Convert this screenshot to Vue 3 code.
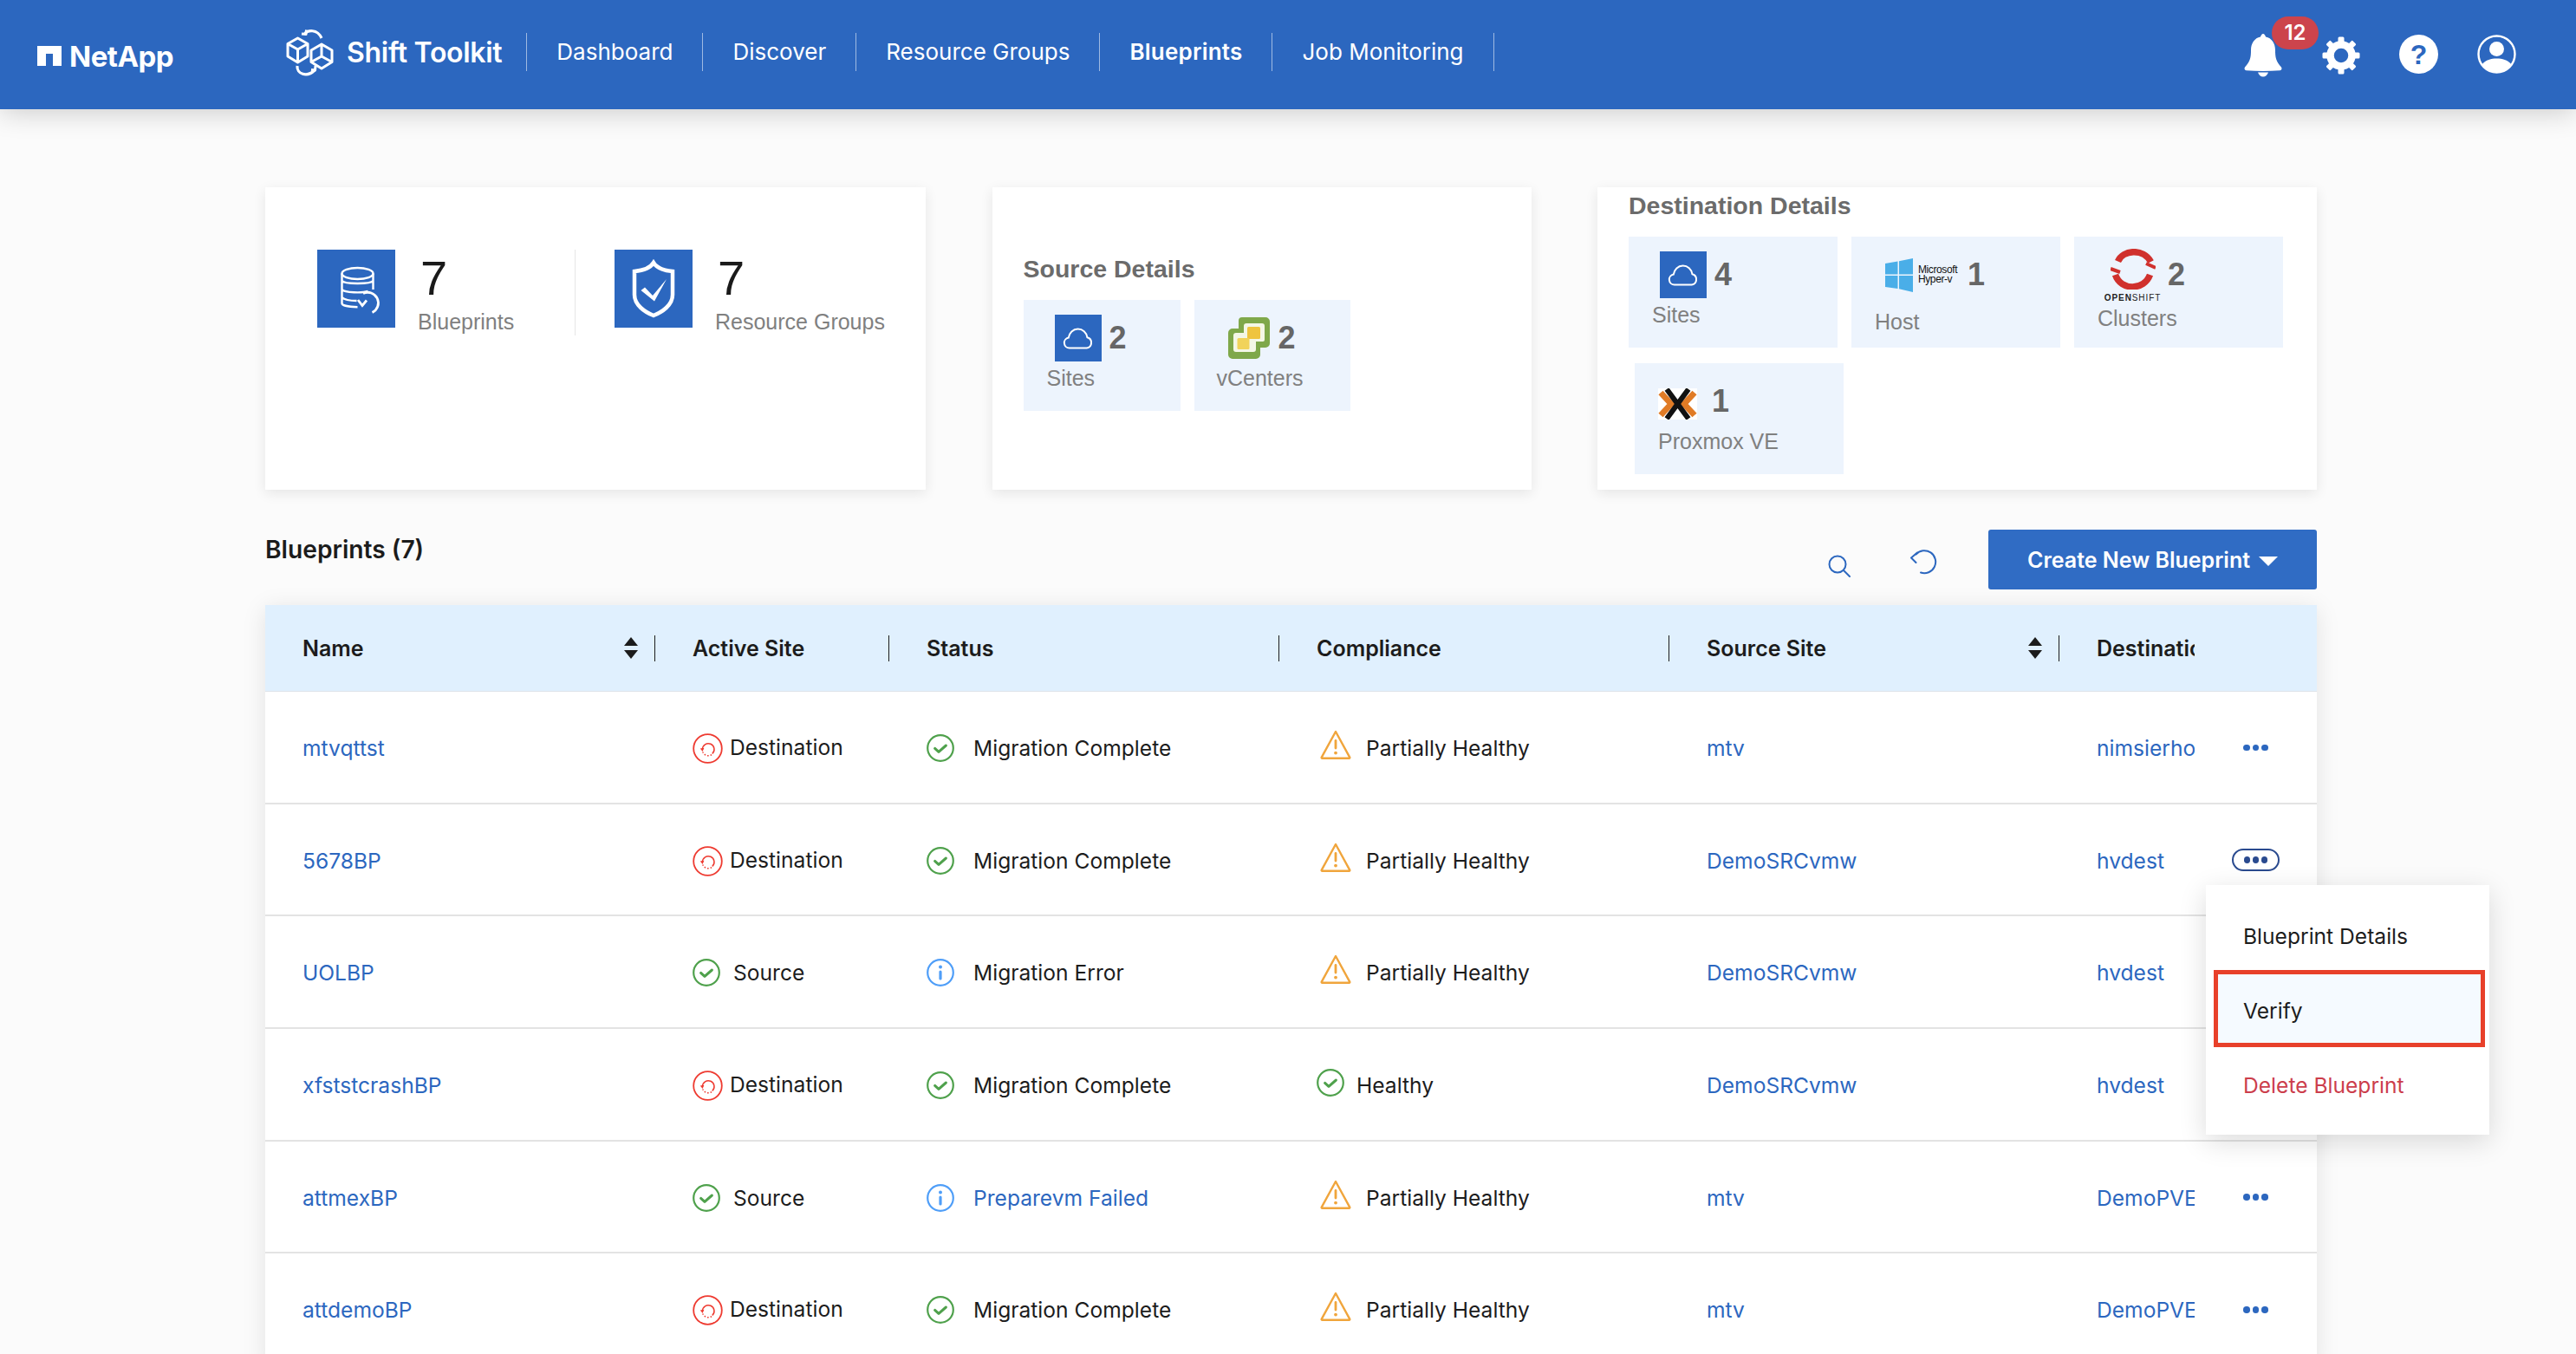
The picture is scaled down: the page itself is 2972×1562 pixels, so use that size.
<script setup>
const navItems = [
  { label: 'Dashboard' },
  { label: 'Discover' },
  { label: 'Resource Groups' },
  { label: 'Blueprints', active: true },
  { label: 'Job Monitoring' }
]
const gearAngles = [0, 45, 90, 135, 180, 225, 270, 315]
const columns = [
  { label: 'Name', sort: true },
  { label: 'Active Site' },
  { label: 'Status' },
  { label: 'Compliance' },
  { label: 'Source Site', sort: true },
  { label: 'Destination', clip: true }
]
const dest = { icon: 'restore', label: 'Destination' }
const src = { icon: 'check', label: 'Source' }
const complete = { icon: 'check', label: 'Migration Complete' }
const partial = { icon: 'warn', label: 'Partially Healthy' }
const rows = [
  { name: 'mtvqttst', site: dest, status: complete, comp: partial, source: 'mtv', target: 'nimsierhost' },
  { name: '5678BP', site: dest, status: complete, comp: partial, source: 'DemoSRCvmw', target: 'hvdest', open: true },
  { name: 'UOLBP', site: src, status: { icon: 'info', label: 'Migration Error' }, comp: partial, source: 'DemoSRCvmw', target: 'hvdest', hideMenu: true },
  { name: 'xfststcrashBP', site: dest, status: complete, comp: { icon: 'check', label: 'Healthy', healthy: true }, source: 'DemoSRCvmw', target: 'hvdest', hideMenu: true },
  { name: 'attmexBP', site: src, status: { icon: 'info', label: 'Preparevm Failed', link: true }, comp: partial, source: 'mtv', target: 'DemoPVEhost' },
  { name: 'attdemoBP', site: dest, status: complete, comp: partial, source: 'mtv', target: 'DemoPVEhost' }
]
</script>

<template>
  <div class="page">
    <svg class="defs" width="0" height="0" aria-hidden="true">
      <symbol id="check" viewBox="0 0 32 32">
        <circle cx="16" cy="16" r="14.8" fill="none" stroke="#4fa14c" stroke-width="2.2" />
        <path d="M9.6 16.4l4.4 4 8.4-7.4" fill="none" stroke="#4fa14c" stroke-width="3" stroke-linecap="round" stroke-linejoin="round" />
      </symbol>
      <symbol id="info" viewBox="0 0 32 32">
        <circle cx="16" cy="16" r="14.8" fill="none" stroke="#4f9ef8" stroke-width="2.2" />
        <circle cx="16" cy="9.5" r="2" fill="#4f9ef8" />
        <rect x="14.4" y="13.5" width="3.2" height="11" rx="1.6" fill="#4f9ef8" />
      </symbol>
      <symbol id="restore" viewBox="0 0 35 35">
        <circle cx="17.5" cy="17.5" r="16.3" fill="none" stroke="#ee3a30" stroke-width="1.8" />
        <path d="M11.4 18.5a6.8 6.8 0 1 1 11.4 5" fill="none" stroke="#ee3a30" stroke-width="1.5" />
        <path d="M22 24.6a6.8 6.8 0 0 1-10.2-3.2" fill="none" stroke="#ee3a30" stroke-width="1.5" stroke-dasharray="1.6 2" />
        <path d="M8.8 17.4l4.6-.6-1.8 4.2z" fill="#ee3a30" />
      </symbol>
      <symbol id="warn" viewBox="0 0 36 34">
        <path d="M18 2L1.8 31.6c-.3.6 0 1.2.7 1.2h31c.7 0 1-.6.7-1.2z" fill="none" stroke="#f0a53c" stroke-width="2.4" stroke-linejoin="round" />
        <rect x="16.6" y="11" width="2.8" height="11.5" rx="1.4" fill="#f0a53c" />
        <circle cx="18" cy="26.6" r="1.9" fill="#f0a53c" />
      </symbol>
      <symbol id="cloud" viewBox="0 0 54 54">
        <path d="M17 38.5a6 6 0 0 1-1.2-11.9C16.6 20.8 21 16.6 26.6 16.6c5.5 0 9.9 4 10.8 9.6a6.3 6.3 0 0 1-.6 12.3z" fill="none" stroke="#fff" stroke-width="2" />
      </symbol>
      <symbol id="sort" viewBox="0 0 16 25">
        <path d="M8 0l8 10H0zM0 15h16l-8 10z" fill="#1c1c1c" />
      </symbol>
    </svg>

    <header class="topbar">
      <div class="netapp">
        <svg class="netapp-mark" viewBox="0 0 28 23"><path d="M0 0h28v23H18V9h-8v14H0z" fill="#fff" /></svg>
        <span>NetApp</span>
      </div>
      <div class="brand">
        <svg class="brand-mark" viewBox="10 8 55 58" fill="none" stroke="#fff" stroke-width="3" stroke-linejoin="round">
          <path d="M23.5 20L12 26.5v14.5L23.5 48 35 41V26.5zM12 26.5L23.5 33 35 26.5M23.5 33v15" />
          <path d="M51 27L39 34v13.500L51 55l12-7.500V34zM51 27v14M39 47.500L51 41l12 6.500" />
          <path d="M31 15.500c4-5 15-6.500 20 4.500" stroke-width="3.200" />
          <path d="M28 15l5 .5.5-5" />
          <path d="M23 52c-1 9 11 14 20 5" stroke-width="3.200" />
          <path d="M39 56.500l4.500.5.500-5" />
        </svg>
        <span>Shift Toolkit</span>
      </div>
      <nav class="nav">
        <a v-for="item in navItems" :key="item.label" class="nav-item" :class="{ active: item.active }">{{ item.label }}</a>
      </nav>
      <div class="tools">
        <div class="bell">
          <svg class="bell-icon" viewBox="0 0 44 51" fill="#fff">
            <path d="M22 1c1.500 0 2.500 2 3 3.600C32 6 36 12 36 20c0 8 .8 13 7 19.500 1 1.500.5 3.500-1.500 3.800-13 1-26 1-39 0-2-.3-2.500-2.300-1.500-3.800C7.200 33 8 28 8 20c0-8 4-14 11-15.400.5-1.600 1.500-3.600 3-3.600z" />
            <path d="M16 45.500h12c-1 3-3.500 5-6 5s-5-2-6-5z" />
          </svg>
          <span class="badge">12</span>
        </div>
        <svg class="gear" viewBox="0 0 44 44">
          <circle cx="22" cy="22" r="12.500" fill="none" stroke="#fff" stroke-width="8.500" />
          <rect v-for="a in gearAngles" :key="a" x="18.500" y="0.500" width="7" height="8" rx="1.500" fill="#fff" :transform="`rotate(${a} 22 22)`" />
        </svg>
        <svg class="help" viewBox="0 0 45 45">
          <circle cx="22.500" cy="22.500" r="22.500" fill="#fff" />
          <text x="22.500" y="34" text-anchor="middle" class="help-mark">?</text>
        </svg>
        <svg class="user" viewBox="0 0 45 45">
          <circle cx="22.500" cy="22.500" r="21" fill="none" stroke="#fff" stroke-width="2.400" />
          <circle cx="22.500" cy="16.500" r="8.500" fill="#fff" />
          <path d="M5.500 34.500C10 29 16 27.500 22.500 27.500s12.500 1.500 17 7a21 21 0 0 1-34 0z" fill="#fff" />
        </svg>
      </div>
    </header>

    <main class="main">
      <section class="cards">
        <div class="card card-total">
          <div class="stat stat-first">
            <div class="stat-icon">
              <svg viewBox="0 0 90 90" fill="none" stroke="#fff" stroke-width="2.400">
                <ellipse cx="46.500" cy="27.500" rx="18" ry="6.500" />
                <path d="M28.500 27.500V62c0 2 6 4 18 4.200M64.500 27.500V46M28.500 36c3 4 33 4 36 0M28.500 46c3 4 24 4 30 2M28.500 55c3 3 10 4 17 4" />
                <path d="M53 50.500a12 12 0 1 1 10.500 22" stroke-width="2.800" />
                <path d="M47 58l5 6.500 5-6" stroke-width="2.800" />
              </svg>
            </div>
            <div class="stat-text">
              <div class="stat-num">7</div>
              <div class="stat-label">Blueprints</div>
            </div>
          </div>
          <div class="stat">
            <div class="stat-icon">
              <svg viewBox="0 0 90 90">
                <path d="M45 15c3 5 10 9 22 10v27c0 12-12 20-22 24-10-4-22-12-22-24V25c12-1 19-5 22-10z" fill="none" stroke="#fff" stroke-width="4.500" />
                <path d="M30.500 47l4.500-3.500 9 9.500 16-19-14 25.500z" fill="#fff" />
              </svg>
            </div>
            <div class="stat-text">
              <div class="stat-num">7</div>
              <div class="stat-label">Resource Groups</div>
            </div>
          </div>
        </div>

        <div class="card card-source">
          <h3 class="card-title">Source Details</h3>
          <div class="tiles">
            <div class="tile tile-src-sites">
              <div class="tile-head">
                <svg class="cloud-box"><use href="#cloud" /></svg>
                <span class="tile-num">2</span>
              </div>
              <div class="tile-label">Sites</div>
            </div>
            <div class="tile tile-vcenter">
              <div class="tile-head">
                <svg class="vcenter-logo" viewBox="0 0 48 48">
                  <path d="M16 0h27a5 5 0 0 1 5 5v25a5 5 0 0 1-5 5h-6v8a5 5 0 0 1-5 5H5a5 5 0 0 1-5-5V18a5 5 0 0 1 5-5h7V4a4 4 0 0 1 4-4z" fill="#7fa84a" />
                  <path d="M21 7h18a3 3 0 0 1 3 3v16a2 2 0 0 1-2 2h-8v9a3 3 0 0 1-3 3H9a3 3 0 0 1-3-3V21a3 3 0 0 1 3-3h9v-8a3 3 0 0 1 3-3z" fill="#f4f7e6" />
                  <rect x="22" y="11" width="15" height="14" rx="1.500" fill="#efc43e" />
                  <rect x="10.500" y="24" width="14" height="13" rx="1.500" fill="#f1d35a" />
                </svg>
                <span class="tile-num">2</span>
              </div>
              <div class="tile-label">vCenters</div>
            </div>
          </div>
        </div>

        <div class="card card-dest">
          <h3 class="card-title">Destination Details</h3>
          <div class="dest-grid">
            <div class="tile tile-wide tile-dest-sites">
              <div class="tile-head">
                <svg class="cloud-box"><use href="#cloud" /></svg>
                <span class="tile-num">4</span>
              </div>
              <div class="tile-label">Sites</div>
            </div>
            <div class="tile tile-wide tile-host">
              <div class="tile-head">
                <div class="hyperv">
                  <svg class="win" viewBox="0 0 32 39">
                    <path d="M0 6l14.500-2.500V18.500H0zM16 3.200L32 0v18.500H16zM0 20h14.500v15L0 33zM16 20h16v19l-16-3.800z" fill="#4aaee8" />
                  </svg>
                  <div class="hyperv-text"><span>Microsoft</span><span>Hyper-v</span></div>
                </div>
                <span class="tile-num">1</span>
              </div>
              <div class="tile-label">Host</div>
            </div>
            <div class="tile tile-wide tile-clusters">
              <div class="tile-head">
                <div class="openshift">
                  <svg viewBox="0 0 52 47" class="os-ring" fill="none" stroke="#d0312d" stroke-width="7.500">
                    <path d="M8.500 14.500C14 1 38 -1 46.500 15" />
                    <path d="M45.500 30C39 48 12 49 5.500 30" />
                    <path d="M0 23l11 4M41 17l11 5" stroke-width="4" />
                  </svg>
                  <div class="os-text"><b>OPEN</b>SHIFT</div>
                </div>
                <span class="tile-num">2</span>
              </div>
              <div class="tile-label">Clusters</div>
            </div>
            <div class="tile tile-wide tile-proxmox">
              <div class="tile-head">
                <svg class="proxmox" viewBox="0 0 45 36">
                  <rect width="45" height="36" fill="#fff" />
                  <path d="M3 5l12 13L3 31M42 5L30 18l12 13" fill="none" stroke="#e07b26" stroke-width="7" />
                  <path d="M10 1l25 34M35 1L10 35" fill="none" stroke="#111" stroke-width="6" />
                </svg>
                <span class="tile-num">1</span>
              </div>
              <div class="tile-label">Proxmox VE</div>
            </div>
          </div>
        </div>
      </section>

      <section class="toolbar">
        <h2 class="list-title">Blueprints (7)</h2>
        <svg class="search" viewBox="0 0 26 26" fill="none" stroke="#2c67bf" stroke-width="2">
          <circle cx="11" cy="11" r="9.500" /><path d="M18 18l7 7" stroke-linecap="round" />
        </svg>
        <svg class="refresh" viewBox="0 0 34 29" fill="none" stroke="#2c67bf" stroke-width="2">
          <path d="M6.500 5.500A13 13 0 1 1 12 26.500" stroke-linecap="round" />
          <path d="M1 9.500l5.500 5.500M1 9.500l7-6" stroke-linecap="round" />
        </svg>
        <button class="create">Create New Blueprint<span class="caret"></span></button>
      </section>

      <section class="table-wrap">
        <div class="table">
          <div class="thead">
            <div v-for="col in columns" :key="col.label" class="th" :class="{ 'th-clip': col.clip }">
              <span class="th-label">{{ col.label }}</span>
              <svg v-if="col.sort" class="sort"><use href="#sort" /></svg>
            </div>
          </div>
          <div v-for="row in rows" :key="row.name" class="tr">
            <div class="td"><a class="link">{{ row.name }}</a></div>
            <div class="td">
              <svg class="site-icon" :class="row.site.icon"><use :href="'#' + row.site.icon" /></svg>
              <span :class="{ 'site-dest': row.site.icon === 'restore' }">{{ row.site.label }}</span>
            </div>
            <div class="td">
              <svg class="st-icon"><use :href="'#' + row.status.icon" /></svg>
              <span :class="{ link: row.status.link }">{{ row.status.label }}</span>
            </div>
            <div class="td">
              <svg v-if="row.comp.healthy" class="healthy-icon"><use href="#check" /></svg>
              <svg v-else class="warn-icon"><use href="#warn" /></svg>
              <span>{{ row.comp.label }}</span>
            </div>
            <div class="td"><a class="link">{{ row.source }}</a></div>
            <div class="td td-clip"><a class="link">{{ row.target }}</a></div>
            <div class="td-action">
              <span v-if="!row.hideMenu" class="dots" :class="{ open: row.open }"><i></i><i></i><i></i></span>
            </div>
          </div>
        </div>
        <div class="menu">
          <div class="menu-item">Blueprint Details</div>
          <div class="menu-item menu-verify"><span>Verify</span></div>
          <div class="menu-item menu-delete">Delete Blueprint</div>
        </div>
      </section>
    </main>
  </div>
</template>

<style>
html, body { margin: 0; background: #fbfbfb; overflow: hidden; }
</style>

<style scoped>
.page { width: 2972px; height: 1562px; overflow: hidden; background: #fbfbfb; font-family: Inter, "Liberation Sans", sans-serif; color: #1c1c1c; position: relative; }
.defs { position: absolute; }

.topbar { height: 126px; background: #2c67bf; color: #fff; display: flex; align-items: center; padding-left: 43px; box-shadow: 0 3px 30px rgba(0,0,0,.2); position: relative; z-index: 2; }
.netapp { display: flex; align-items: center; gap: 9px; width: 287px; font-size: 33px; font-weight: 700; margin-top: 3px; letter-spacing: -.5px; }
.netapp-mark { width: 28px; height: 23px; }
.brand { display: flex; align-items: center; gap: 15px; font-size: 32px; font-weight: 600; letter-spacing: -.3px; margin-top: -5px; padding-right: 28px; border-right: 0; }
.brand-mark { width: 55px; height: 58px; }
.nav { display: flex; align-items: center; height: 44px; margin-top: -6px; border-left: 1px solid rgba(255,255,255,.55); }
.nav-item { padding: 0 34px; font-size: 26px; line-height: 44px; border-right: 1px solid rgba(255,255,255,.55); white-space: nowrap; }
.nav-item.active { font-weight: 600; letter-spacing: .2px; }
.tools { position: absolute; top: 0; right: 69px; height: 126px; display: flex; align-items: center; }
.bell { position: relative; width: 44px; height: 51px; margin-top: 1px; }
.bell-icon { width: 44px; height: 51px; display: block; }
.badge { position: absolute; left: 32px; top: -19px; width: 54px; height: 38px; border-radius: 19px; background: #cc444c; font-size: 24px; font-weight: 600; line-height: 38px; text-align: center; }
.gear { width: 44px; height: 44px; margin-left: 46px; margin-top: 1px; }
.help { width: 45px; height: 45px; margin-left: 45px; margin-top: -1px; }
.help-mark { font: 700 32px "Liberation Sans", sans-serif; fill: #2c67bf; }
.user { width: 45px; height: 45px; margin-left: 45px; margin-top: -1px; }

.main { padding: 90px 299px 0 306px; }
.cards { display: flex; justify-content: space-between; }
.card { background: #fff; height: 349px; box-shadow: 0 4px 14px rgba(0,0,0,.09); box-sizing: border-box; font-family: "Liberation Sans", sans-serif; }
.card-total { width: 762px; display: flex; padding: 72px 0 0 60px; }
.stat { display: flex; gap: 26px; align-items: flex-start; }
.stat-first { width: 297px; height: 99px; border-right: 1px solid #e6e6e6; margin-right: 45px; box-sizing: content-box; }
.stat-icon { width: 90px; height: 90px; background: #2c67bf; flex: none; }
.stat-icon svg { width: 90px; height: 90px; display: block; }
.stat-num { font-size: 56px; line-height: 56px; color: #1a1a1a; margin-top: 5px; padding-left: 3px; }
.stat-label { font-size: 25px; line-height: 30px; color: #808080; margin-top: 7px; }
.card-source { width: 622px; padding: 78px 0 0 36px; }
.card-dest { width: 830px; padding: 0 0 0 36px; }
.card-title { margin: 0 0 20px; font-size: 28.500px; line-height: 32px; font-weight: 700; color: #6b6b6b; }
.card-dest .card-title { margin: 0; padding-top: 7px; height: 57px; line-height: 28px; box-sizing: border-box; }
.tiles { display: flex; gap: 16px; }
.tile { width: 181px; height: 128px; background: #edf4fd; box-sizing: border-box; padding-top: 18px; }
.tile-wide { width: 241px; }
.tile-vcenter { width: 180px; }
.tile-head { display: flex; align-items: center; height: 52px; }
.tile-num { font-size: 36px; font-weight: 700; color: #666; line-height: 52px; }
.tile-label { font-size: 25px; line-height: 30px; color: #808080; margin-left: 27px; margin-top: 5px; }
.cloud-box { width: 54px; height: 54px; background: #2c67bf; display: block; flex: none; }
.tile-src-sites .tile-head, .tile-dest-sites .tile-head { padding-left: 36px; gap: 9px; }
.tile-vcenter .tile-head { padding-left: 39px; gap: 10px; }
.tile-vcenter .tile-label { margin-left: 26px; }
.vcenter-logo { width: 48px; height: 48px; flex: none; }
.dest-grid { display: flex; flex-wrap: wrap; gap: 18px 16px; width: 760px; }
.tile-host .tile-head { padding-left: 39px; gap: 12px; }
.tile-host .tile-label { margin-top: 13px; }
.hyperv { display: flex; gap: 6px; align-items: center; width: 83px; }
.win { width: 32px; height: 39px; flex: none; }
.hyperv-text { font-size: 12px; line-height: 11px; color: #111; letter-spacing: -.4px; display: flex; flex-direction: column; }
.tile-clusters .tile-head { padding-left: 37px; gap: 10px; }
.tile-clusters .tile-label { margin-top: 9px; }
.openshift { width: 61px; display: flex; flex-direction: column; align-items: center; margin-top: 2px; }
.os-ring { width: 52px; height: 47px; }
.os-text { font-size: 10px; line-height: 10px; letter-spacing: .9px; margin-top: 5px; color: #222; white-space: nowrap; }
.tile-dest-sites, .tile-host, .tile-clusters { flex: none; }
.tile-proxmox { margin-left: 7px; margin-top: 0; }
.tile-proxmox .tile-head { padding-left: 27px; gap: 17px; }
.proxmox { width: 45px; height: 36px; margin-top: 6px; flex: none; }

.toolbar { display: flex; align-items: flex-start; margin-top: 46px; height: 69px; margin-bottom: 18px; }
.list-title { margin: 0 auto 0 0; font-size: 28.200px; line-height: 46px; font-weight: 600; color: #1c1c1c; }
.search { width: 26px; height: 26px; margin-top: 29px; margin-right: 69px; }
.refresh { width: 34px; height: 29px; margin-top: 23px; margin-right: 56px; }
.create { width: 379px; height: 69px; border: 0; border-radius: 3px; background: #306cc4; color: #fff; font-family: inherit; font-size: 25px; font-weight: 600; padding: 0; display: flex; align-items: center; justify-content: center; gap: 10px; }
.caret { width: 0; height: 0; border-left: 11px solid transparent; border-right: 11px solid transparent; border-top: 11px solid #fff; margin-top: 3px; }

.table-wrap { position: relative; width: 2367px; }
.table { background: #fff; box-shadow: 0 4px 26px rgba(0,0,0,.1); }
.thead, .tr { display: grid; grid-template-columns: 450px 270px 450px 450px 450px 156px 141px; }
.thead { height: 100px; background: #e0f0fe; border-bottom: 1px solid #dde3ea; box-sizing: border-box; }
.th { display: flex; align-items: center; padding-left: 43px; position: relative; font-size: 25px; font-weight: 600; color: #1c1c1c; white-space: nowrap; min-width: 0; }
.th::after { content: ""; position: absolute; right: 0; top: 35px; height: 30px; border-right: 1px solid #1c1c1c; }
.th-clip { overflow: hidden; padding-right: 0; }
.th-clip::after { display: none; }
.sort { width: 16px; height: 25px; position: absolute; right: 20px; top: 37px; }
.tr { height: 129.700px; border-bottom: 2px solid #e3e3e3; box-sizing: border-box; font-size: 24.600px; }
.td { display: flex; align-items: center; padding-left: 43px; padding-top: 2px; white-space: nowrap; min-width: 0; overflow: hidden; }
.td-clip { overflow: hidden; }
.link { color: #2c67bf; }
.site-icon { width: 32px; height: 32px; margin-right: 15px; flex: none; }
.site-icon.restore { width: 35px; height: 35px; margin-right: 8px; margin-top: 1px; }
.site-dest { margin-top: -2px; }
.st-icon { width: 32px; height: 32px; margin-right: 22px; flex: none; }
.warn-icon { width: 36px; height: 34px; margin: -8px 17px 0 4px; flex: none; }
.healthy-icon { width: 32px; height: 32px; margin: -6px 14px 0 0; flex: none; }
.td-action { display: flex; align-items: center; padding-left: 56px; padding-top: 1px; }
.dots { display: flex; gap: 3px; }
.dots i { width: 7.500px; height: 7.500px; border-radius: 50%; background: #2c67bf; display: block; }
.dots.open { border: 2px solid #2a4a8f; border-radius: 14px; padding: 7px 12px; margin-left: -13px; width: 55px; box-sizing: border-box; height: 26px; justify-content: center; }
.dots.open i { background: #2a4a8f; }

.menu { position: absolute; left: 2239px; top: 323px; width: 327px; padding: 16px 0 14px; background: #fff; box-shadow: 0 8px 30px rgba(0,0,0,.14); z-index: 3; font-size: 24.600px; }
.menu-item { height: 86px; display: flex; align-items: center; padding-left: 43px; position: relative; }
.menu-verify span { position: relative; z-index: 1; }
.menu-verify::before { content: ""; position: absolute; left: 9px; right: 5px; top: -4px; bottom: 1px; background: #f5faff; border: 5px solid #e8402a; box-sizing: border-box; }
.menu-delete { color: #cc3e4c; }
</style>
